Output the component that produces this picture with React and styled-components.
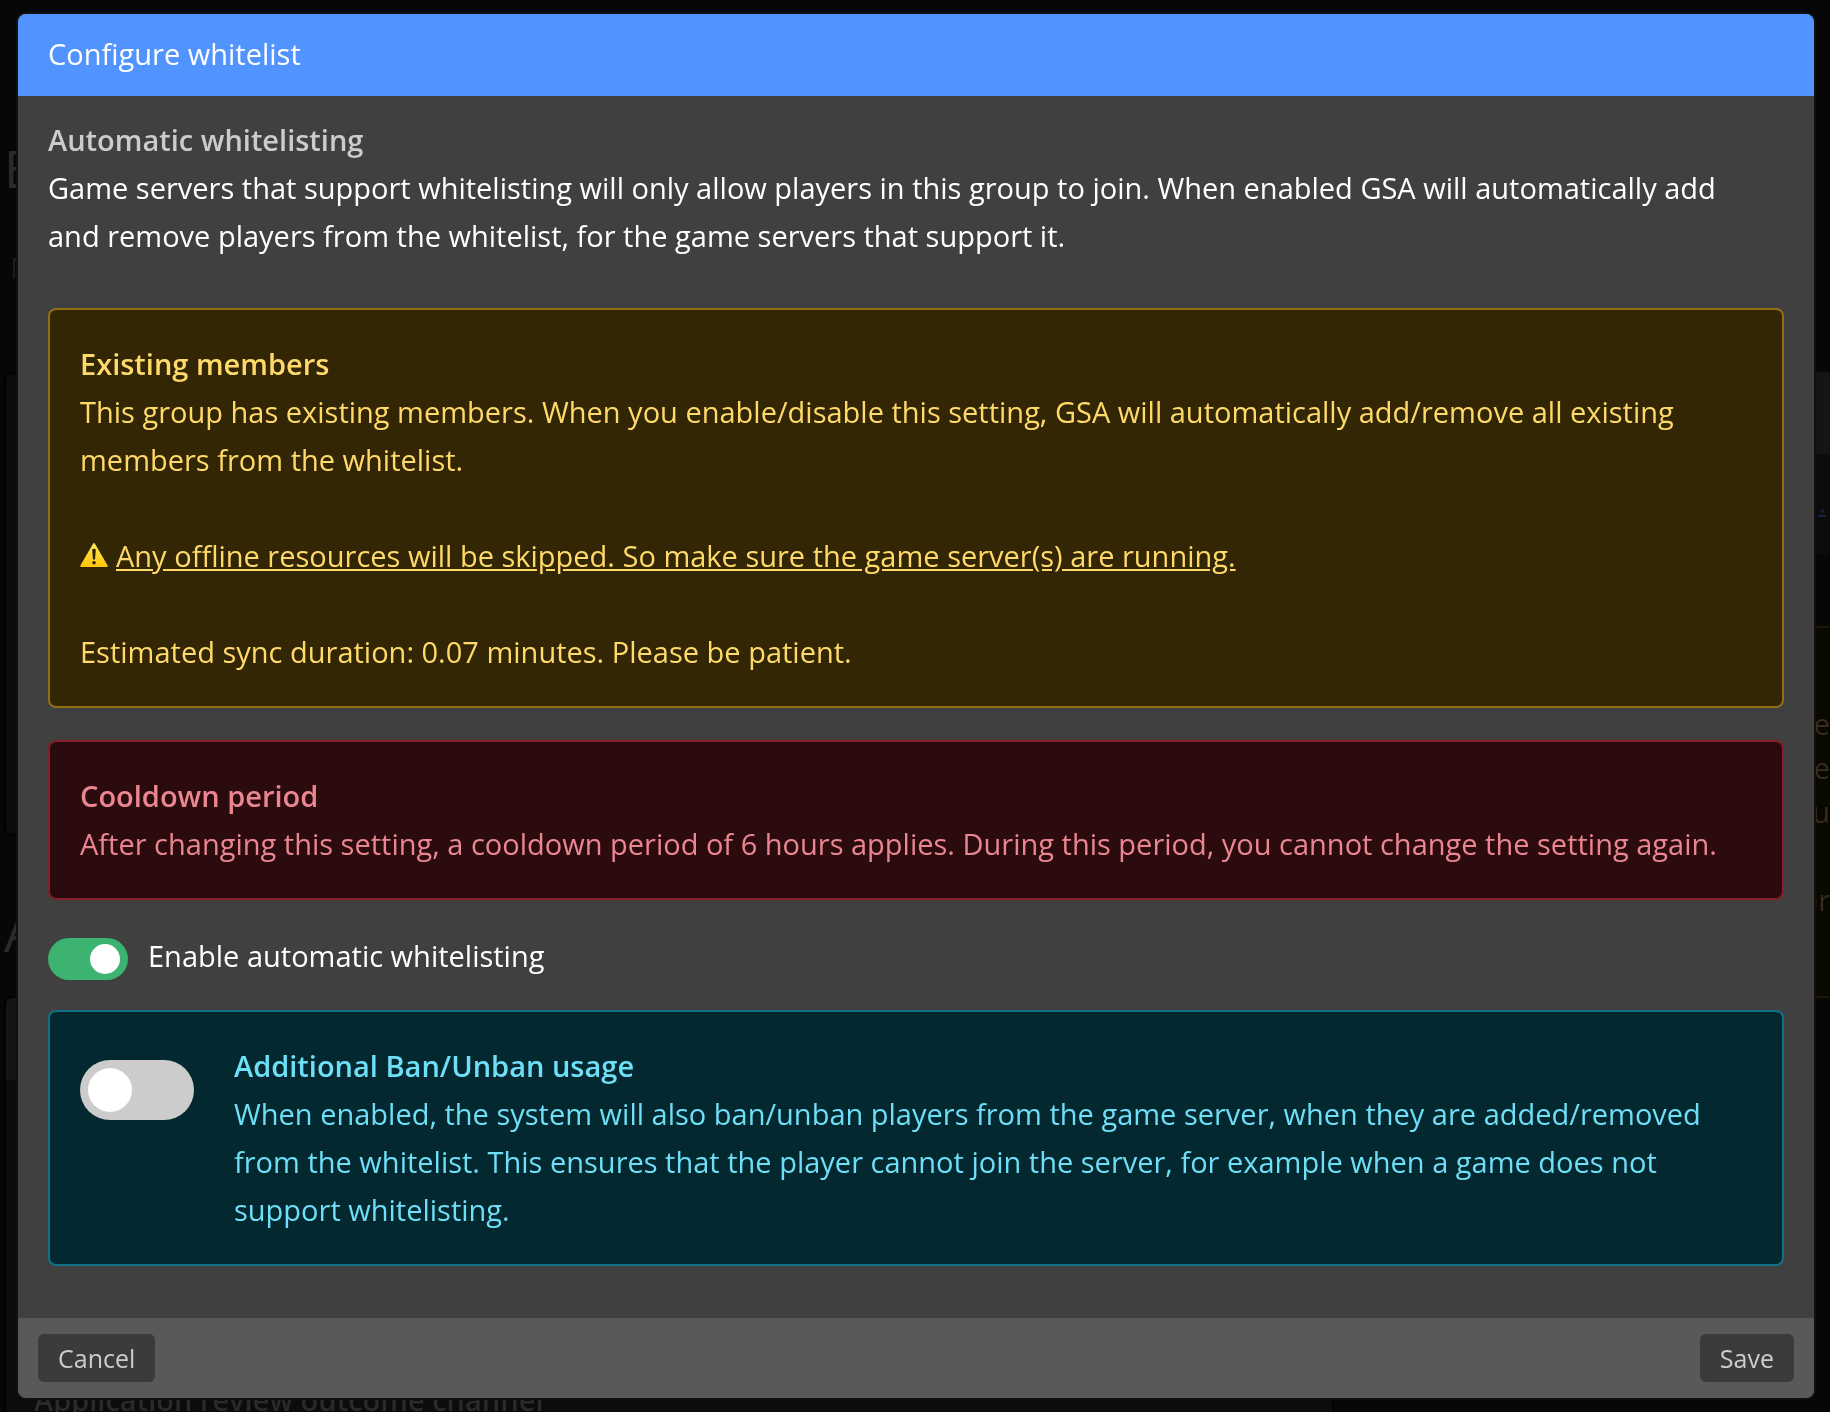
import React, { useState } from "react";
import styled, { createGlobalStyle } from "styled-components";

const GlobalStyle = createGlobalStyle`
  *, *::before, *::after { box-sizing: border-box; }
  body {
    margin: 0;
    background: #070707;
    color: #fff;
    font-family: "Open Sans", "Noto Sans", sans-serif;
    font-size: 29px;
    font-weight: 500;
    line-height: 48px;
  }
  h1, h2, h3, p { margin: 0; font-size: inherit; }
`;

/* ---- page behind the dialog ---- */

const Page = styled.main`
  position: fixed;
  inset: 0;
  overflow: hidden;
  display: grid;
  grid-template-columns: minmax(0, 1fr) 492px;
  gap: 4px;
  padding: 136px 0 0 4px;
  color: #2a2a2a;
`;

const Column = styled.div`
  display: flex;
  flex-direction: column;
`;

const PageTitle = styled.h2`
  font-size: 52px;
  line-height: 64px;
  font-weight: 500;
`;

const PageNote = styled.p`
  padding: 44px 6px 80px;
  color: #1c1c1c;
`;

const PageCard = styled.section`
  height: ${(p) => p.$height};
  flex: ${(p) => (p.$grow ? "1" : "none")};
  margin: ${(p) => (p.$grow ? "32px 0 0" : "0 0 64px")};
  border: 2px solid #020202;
  border-radius: 8px;
  background: #0c0c0c;
`;

const PageCardHead = styled.div`
  height: 82px;
  border-radius: 6px 6px 0 0;
  background: #151515;
`;

const FieldLabel = styled.p`
  padding: 296px 28px 0;
  font-weight: 600;
`;

const SideHead = styled.div`
  margin-top: 236px;
  height: 82px;
  background: #151515;
`;

const SideLinkRow = styled.div`
  height: 100px;
  padding: 24px 4px;
  text-align: right;
  background: #0c0c0c;
  color: #142444;
  text-decoration: underline;
`;

const SideNotice = styled.div`
  margin-top: 72px;
  height: 372px;
  padding: 74px 0;
  border: solid #1c1602;
  border-width: 2px 0;
  background: #0a0800;
  color: #332e1a;
  line-height: 44px;
  text-align: right;
  white-space: pre-line;
`;

/* ---- dialog ---- */

const Overlay = styled.div`
  position: relative;
  min-height: 100vh;
  display: flex;
  align-items: center;
  padding: 12px 14px 12px 16px;
`;

const Dialog = styled.div`
  flex: 1;
  overflow: hidden;
  border: 2px solid #111;
  border-radius: 10px;
  background: #404040;
`;

const DialogHeader = styled.header`
  padding: 16px 30px 18px;
  background: #5294ff;
`;

const DialogTitle = styled.h1`
  font-weight: 500;
`;

const DialogBody = styled.div`
  padding: 20px 30px 52px;
`;

const Heading = styled.h2`
  font-weight: 600;
  color: ${(p) => p.$color || "inherit"};
`;

const Intro = styled.section`
  margin-bottom: 48px;
  padding-right: 32px;
`;

const tones = {
  warning: { line: "#8f6f12", fill: "#332604", text: "#ffda6a" },
  danger: { line: "#842029", fill: "#2c0b0e", text: "#ea868f" },
  info: { line: "#117286", fill: "#032830", text: "#6edff6" },
};

const Notice = styled.section`
  display: flex;
  gap: 40px;
  padding: 30px;
  margin-bottom: ${(p) => (p.$last ? "0" : "32px")};
  border: 2px solid ${(p) => tones[p.$tone].line};
  border-radius: 8px;
  background: ${(p) => tones[p.$tone].fill};
  color: ${(p) => tones[p.$tone].text};
`;

const Paragraph = styled.p`
  margin-top: ${(p) => (p.$spaced ? "48px" : "0")};
`;

const WarningIcon = styled.svg`
  width: 28px;
  height: 24px;
  margin-right: 8px;
`;

const SwitchRow = styled.label`
  display: flex;
  align-items: flex-end;
  gap: 20px;
  margin-bottom: 30px;
`;

const Switch = styled.input`
  appearance: none;
  flex: none;
  display: flex;
  align-items: center;
  justify-content: ${(p) => (p.checked ? "flex-end" : "flex-start")};
  width: ${(p) => (p.$large ? "114px" : "80px")};
  height: ${(p) => (p.$large ? "60px" : "42px")};
  margin: ${(p) => (p.$large ? "18px 0 0" : "0")};
  padding: 0 8px;
  border-radius: 30px;
  background: ${(p) => (p.checked ? "#3cb371" : "#ccc")};
  cursor: pointer;

  &::before {
    content: "";
    width: ${(p) => (p.$large ? "44px" : "30px")};
    height: ${(p) => (p.$large ? "44px" : "30px")};
    border-radius: 50%;
    background: #fff;
  }
`;

const DialogFooter = styled.footer`
  display: flex;
  align-items: center;
  justify-content: space-between;
  padding: 16px 20px;
  background: #595959;
`;

const Button = styled.button`
  height: 48px;
  padding: 0 20px;
  border: 0;
  border-radius: 6px;
  background: #3b3b3b;
  color: #ccc;
  font-family: inherit;
  font-size: 25px;
  font-weight: 400;
  line-height: 48px;
  cursor: pointer;
`;

function Backdrop() {
  return (
    <Page aria-hidden="true">
      <Column>
        <PageTitle>E</PageTitle>
        <PageNote>M</PageNote>
        <PageCard $height="464px" />
        <PageTitle>A</PageTitle>
        <PageCard $grow>
          <PageCardHead />
          <FieldLabel>Application review outcome channel</FieldLabel>
        </PageCard>
      </Column>
      <Column>
        <SideHead />
        <SideLinkRow>.</SideLinkRow>
        <SideNotice>{"e\ne\nu\n\nor"}</SideNotice>
      </Column>
    </Page>
  );
}

export default function App() {
  const [whitelist, setWhitelist] = useState(true);
  const [ban, setBan] = useState(false);

  return (
    <>
      <GlobalStyle />
      <Backdrop />
      <Overlay>
        <Dialog role="dialog" aria-modal="true" aria-labelledby="dialog-title">
          <DialogHeader>
            <DialogTitle id="dialog-title">Configure whitelist</DialogTitle>
          </DialogHeader>
          <DialogBody>
            <Intro>
              <Heading $color="#ccc">Automatic whitelisting</Heading>
              <Paragraph>
                Game servers that support whitelisting will only allow players in this group to
                join. When enabled GSA will automatically add and remove players from the
                whitelist, for the game servers that support it.
              </Paragraph>
            </Intro>

            <Notice $tone="warning">
              <div>
                <Heading>Existing members</Heading>
                <Paragraph>
                  This group has existing members. When you enable/disable this setting, GSA will
                  automatically add/remove all existing members from the whitelist.
                </Paragraph>
                <Paragraph $spaced>
                  <WarningIcon viewBox="0 0 28 24" aria-hidden="true">
                    <defs>
                      <linearGradient id="sign" x1="0" y1="0" x2="0" y2="1">
                        <stop offset="0" stopColor="#ffe75a" />
                        <stop offset="1" stopColor="#ffc60a" />
                      </linearGradient>
                    </defs>
                    <path
                      d="M13.2 0.6Q14 -0.5 14.8 0.6L27.6 22.4Q28 23.8 26.8 24H1.2Q0 23.8 0.4 22.4Z"
                      fill="url(#sign)"
                    />
                    <path d="M12.2 6.4Q14 5 15.8 6.4L15 16.4H13Z" fill="#2a2008" />
                    <circle cx="14" cy="19.8" r="1.8" fill="#2a2008" />
                  </WarningIcon>
                  <u>Any offline resources will be skipped. So make sure the game server(s) are running.</u>
                </Paragraph>
                <Paragraph $spaced>
                  Estimated sync duration: 0.07 minutes. Please be patient.
                </Paragraph>
              </div>
            </Notice>

            <Notice $tone="danger">
              <div>
                <Heading>Cooldown period</Heading>
                <Paragraph>
                  After changing this setting, a cooldown period of 6 hours applies. During this
                  period, you cannot change the setting again.
                </Paragraph>
              </div>
            </Notice>

            <SwitchRow>
              <Switch
                type="checkbox"
                role="switch"
                checked={whitelist}
                onChange={(e) => setWhitelist(e.target.checked)}
              />
              Enable automatic whitelisting
            </SwitchRow>

            <Notice $tone="info" $last>
              <Switch
                $large
                type="checkbox"
                role="switch"
                aria-labelledby="ban-title"
                checked={ban}
                onChange={(e) => setBan(e.target.checked)}
              />
              <div>
                <Heading id="ban-title">Additional Ban/Unban usage</Heading>
                <Paragraph>
                  When enabled, the system will also ban/unban players from the game server, when
                  they are added/removed from the whitelist. This ensures that the player cannot
                  join the server, for example when a game does not support whitelisting.
                </Paragraph>
              </div>
            </Notice>
          </DialogBody>
          <DialogFooter>
            <Button type="button">Cancel</Button>
            <Button type="button">Save</Button>
          </DialogFooter>
        </Dialog>
      </Overlay>
    </>
  );
}
